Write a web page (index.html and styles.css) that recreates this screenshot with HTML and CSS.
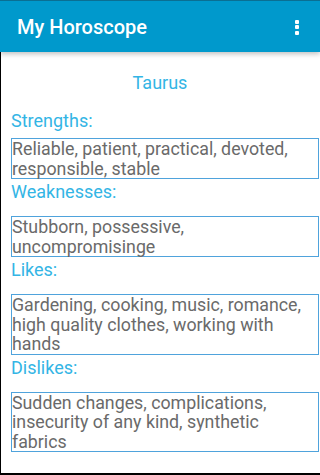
FILE: index.html
```html
<!DOCTYPE html>
<html>
<head>
<meta charset="utf-8">
<link rel="stylesheet" href="styles.css">
</head>
<body>
<div class="screen">
  <header class="appbar">
    <div class="title">My Horoscope</div>
    <div class="overflow"><span></span><span></span><span></span></div>
  </header>
  <main class="content">
    <div class="sign">Taurus</div>
    <div class="label label-first">Strengths:</div>
    <div class="box">Reliable, patient, practical, devoted, responsible, stable</div>
    <div class="label">Weaknesses:</div>
    <div class="box">Stubborn, possessive, uncompromisinge</div>
    <div class="label">Likes:</div>
    <div class="box">Gardening, cooking, music, romance, high quality clothes, working with hands</div>
    <div class="label">Dislikes:</div>
    <div class="box">Sudden changes, complications, insecurity of any kind, synthetic fabrics</div>
  </main>
</div>
</body>
</html>
```
FILE: styles.css
```css
html, body {
  margin: 0;
  padding: 0;
  background: #000;
}
.screen {
  width: 320px;
  height: 473px;
  display: flex;
  flex-direction: column;
  background: #fff;
  font-family: Roboto, "Liberation Sans", sans-serif;
  overflow: hidden;
}
.appbar {
  height: 52px;
  flex: none;
  background: #0099cc;
  border-top: 1px solid #0a6f93;
  box-sizing: border-box;
  display: flex;
  align-items: center;
  justify-content: space-between;
  padding: 0 21px 0 17px;
  box-shadow: 0 2px 5px rgba(0,0,0,0.25);
  position: relative;
  z-index: 1;
}
.title {
  color: #fff;
  font-size: 20px;
  font-weight: 500;
  padding-top: 1px;
}
.overflow {
  display: flex;
  flex-direction: column;
  gap: 1.5px;
  padding-top: 1px;
}
.overflow span {
  width: 4px;
  height: 4px;
  background: #fff;
  border-radius: 1px;
}
.content {
  flex: 1;
  border-left: 1px solid #000;
  padding: 20px 1px 0 10px;
  display: flex;
  flex-direction: column;
}
.sign {
  text-align: center;
  color: #33b5e5;
  font-size: 18px;
  line-height: 21px;
  margin-bottom: 18px;
  padding-right: 10px;
}
.label {
  color: #33b5e5;
  font-size: 18px;
  line-height: 19px;
  margin: 3px 0 15px;
}
.label-first {
  margin: 0 0 8px;
}
.box {
  border: 1px solid #4fa3dc;
  color: #6a6a6a;
  font-size: 17.8px;
  line-height: 19.5px;
  padding: 0 4px 0 0;
}
```
